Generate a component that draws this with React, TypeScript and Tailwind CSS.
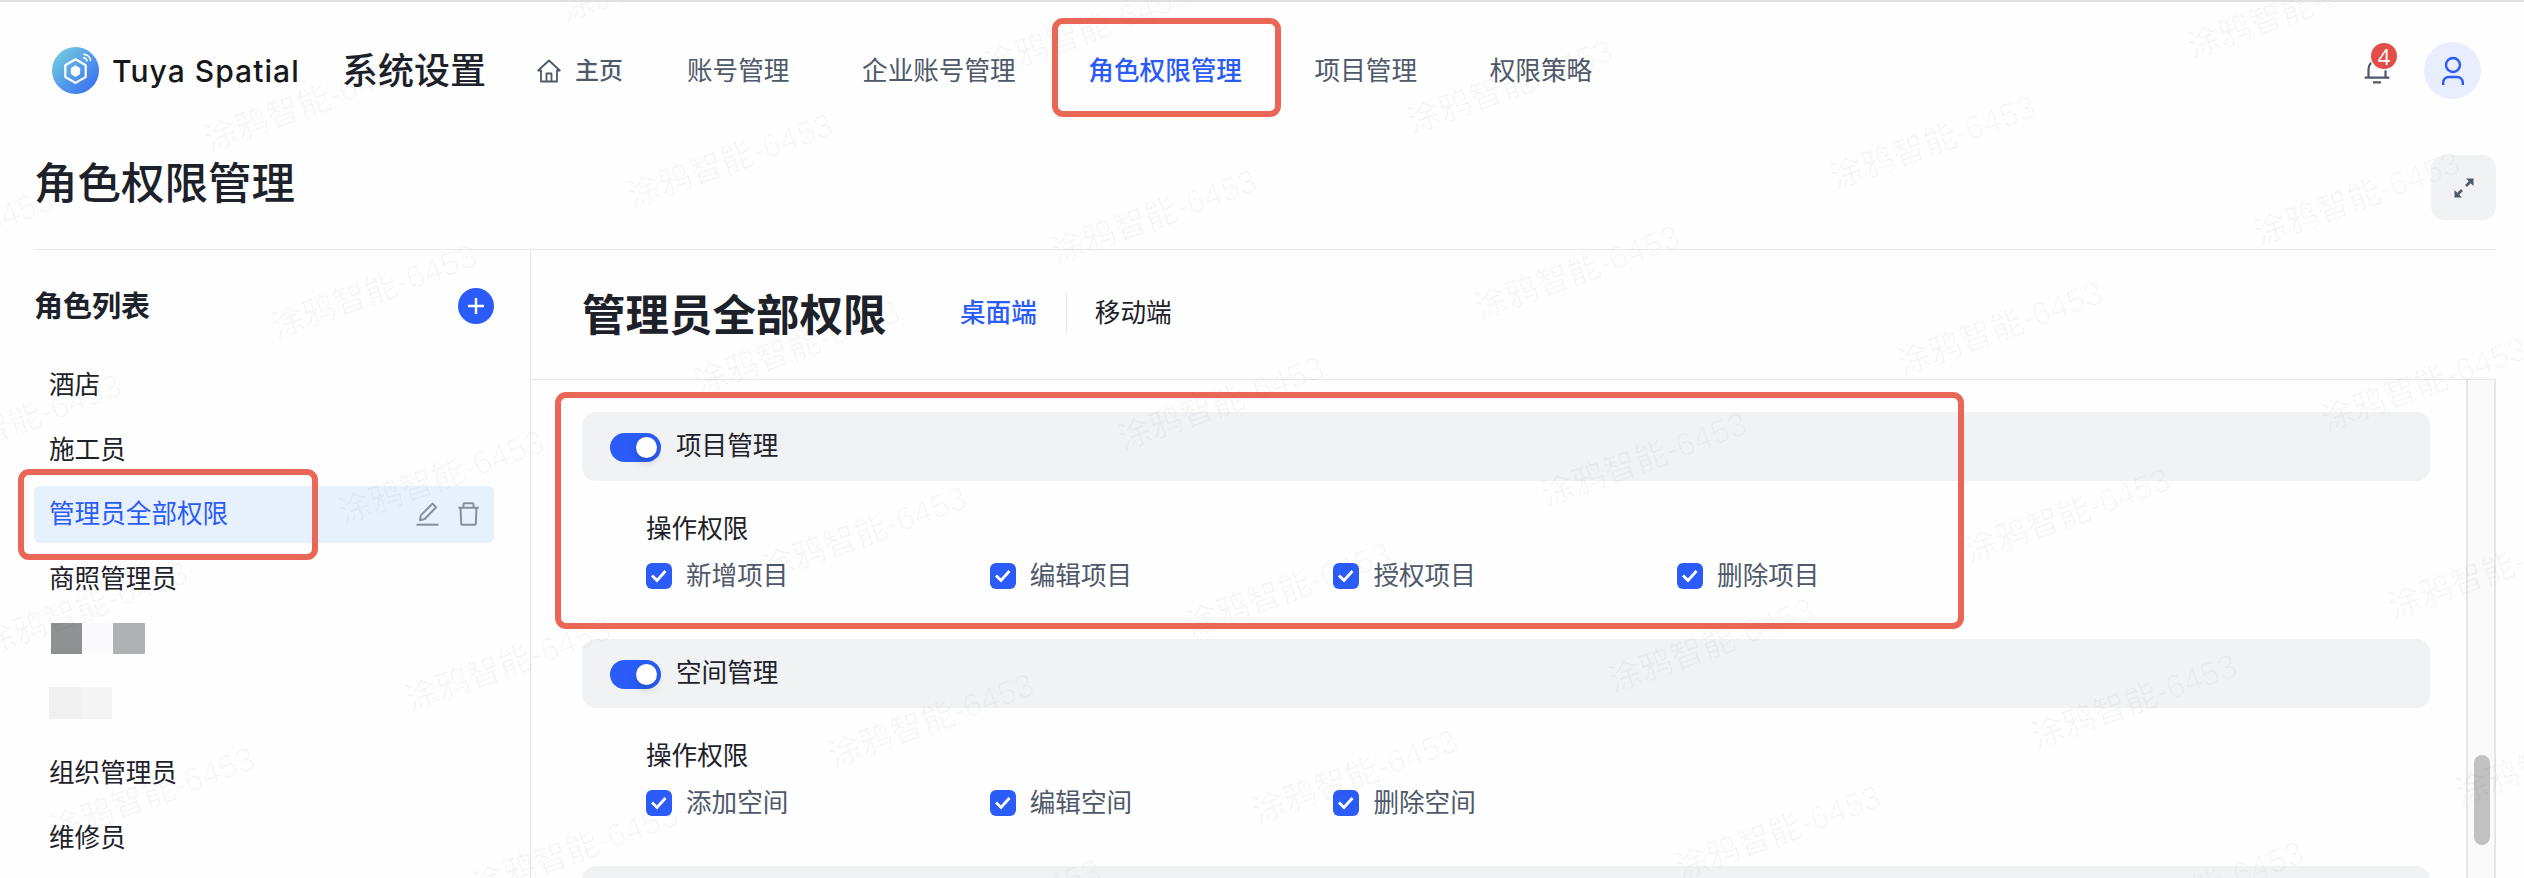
import React, { useState } from "react";

const FONT = "font-['Inter','Noto_Sans_CJK_SC',sans-serif]";

const NAV = ["账号管理", "企业账号管理", "角色权限管理", "项目管理", "权限策略"];

const ROLES = [
  { name: "酒店" },
  { name: "施工员" },
  { name: "管理员全部权限" },
  { name: "商照管理员" },
  { name: "", mask: "dark" },
  { name: "", mask: "light" },
  { name: "组织管理员" },
  { name: "维修员" },
];

const GROUPS = [
  { title: "项目管理", items: ["新增项目", "编辑项目", "授权项目", "删除项目"] },
  { title: "空间管理", items: ["添加空间", "编辑空间", "删除空间"] },
];

// Every mark is one step of a skewed grid away from the next
const MARKS: { x: number; y: number }[] = [];
for (let i = -2; i < 8; i++) {
  for (let j = -4; j < 7; j++) {
    const x = 307 + i * 423.3 + j * 67;
    const y = 104 + i * 56 + j * 186.5;
    if (x > -100 && x < 2624 && y > -45 && y < 923) MARKS.push({ x, y });
  }
}

function Logo() {
  return (
    <svg width="47" height="47" viewBox="0 0 47 47" fill="none">
      <defs>
        <linearGradient id="logo" x1="6" y1="6" x2="41" y2="41" gradientUnits="userSpaceOnUse">
          <stop stopColor="#6fc7e0" />
          <stop offset="1" stopColor="#3c74f0" />
        </linearGradient>
      </defs>
      <circle cx="23.5" cy="23.5" r="23.5" fill="url(#logo)" />
      <path d="M23.500 12.300l10.200 5.900v11.800l-10.200 5.900-10.200-5.900V18.200z" stroke="#fff" strokeWidth="2.200" strokeLinejoin="round" />
      <path d="M23.500 18.800l4.200 2.500v5.600l-4.200 2.500-4.200-2.500v-5.600z" fill="#fff" stroke="#fff" strokeLinejoin="round" />
      <path d="M32 7.400a7 7 0 0 1 6.500 6M31.500 10.800a3.600 3.600 0 0 1 3.400 3" stroke="#fff" strokeWidth="1.600" strokeLinecap="round" />
    </svg>
  );
}

function HomeIcon() {
  return (
    <svg width="24" height="24" viewBox="0 0 24 24" fill="none" stroke="#4e5969" strokeWidth="1.800" strokeLinejoin="round">
      <path d="M4 11.500H1.200L12 1.500l10.800 10H20V22.500H4z" />
      <path d="M9.500 22v-7.500h5V22" />
    </svg>
  );
}

function BellIcon() {
  return (
    <svg width="26" height="26" viewBox="0 0 26 26" fill="none" stroke="#4e5969" strokeWidth="2.200">
      <path d="M4.500 19.500V11a8.500 8.500 0 0 1 17 0v8.500M.7 19.700h24.600M9 24.300h8" />
    </svg>
  );
}

function UserIcon() {
  return (
    <svg width="24" height="30" viewBox="0 0 24 30" fill="none" stroke="#2b5cf9" strokeWidth="2.400">
      <circle cx="12" cy="9" r="7" />
      <path d="M2.200 29v-2.500a5.500 5.500 0 0 1 5.500-5.500h8.600a5.500 5.500 0 0 1 5.500 5.500V29" />
    </svg>
  );
}

function ExpandIcon() {
  return (
    <svg width="20" height="20" viewBox="0 0 20 20" fill="#4e5969" stroke="#4e5969">
      <path d="M12 .5h7.500V8zM.5 12v7.500H8z" stroke="none" />
      <path d="M12 8l4-4M8 12l-4 4" strokeWidth="2.600" />
    </svg>
  );
}

function EditIcon() {
  return (
    <svg width="23" height="24" viewBox="0 0 23 24" fill="none" stroke="#868e9b" strokeWidth="2" strokeLinejoin="round">
      <path d="M4 18.200l.8-4.800L16.500 1.600l3.600 3.600L8.700 17z" />
      <path d="M.5 22.700h22" />
    </svg>
  );
}

function TrashIcon() {
  return (
    <svg width="21" height="24" viewBox="0 0 21 24" fill="none" stroke="#868e9b" strokeWidth="2" strokeLinejoin="round">
      <path d="M.3 5.800h20.400M5.500 5.500V2.200a1 1 0 0 1 1-1h8a1 1 0 0 1 1 1v3.300M2.500 6l.7 15.500a1.200 1.200 0 0 0 1.200 1.200h12.200a1.200 1.200 0 0 0 1.200-1.200L18.500 6" />
    </svg>
  );
}

function Switch() {
  return (
    <span className="flex h-[29px] w-[51px] items-center justify-end rounded-full bg-[#2b5cf9] pr-1">
      <span className="size-[21px] rounded-full bg-white shadow-[0_4px_8px_rgba(0,35,11,0.2)]" />
    </span>
  );
}

function Checkbox({ label }: { label: string }) {
  return (
    <label className="flex w-[343.7px] items-center gap-3.5 text-[#4e5969]">
      <span className="flex size-[26px] items-center justify-center rounded-[6px] bg-[#2b5cf9]">
        <svg width="18" height="14" viewBox="0 0 18 14" fill="none" stroke="#fff" strokeWidth="2.800">
          <path d="M2 6.500l5 5L15.500 2" />
        </svg>
      </span>
      {label}
    </label>
  );
}

function Mask({ kind }: { kind: string }) {
  if (kind === "dark") {
    return (
      <span className="ml-0.5 flex h-[31px] -translate-y-[5px]">
        <span className="w-[31px] bg-[#8f9193]" />
        <span className="w-[31px] bg-[#fafafc]" />
        <span className="w-8 bg-[#b0b1b3]" />
      </span>
    );
  }
  return (
    <span className="flex h-8 -translate-y-[5px]">
      <span className="w-8 bg-[#f0f0f0]" />
      <span className="w-[31px] bg-[#f4f4f4]" />
    </span>
  );
}

function Highlight({ className }: { className: string }) {
  return <span className={`pointer-events-none absolute z-10 rounded-[11px] border-[6px] border-[#ea6656] ${className}`} />;
}

export default function App() {
  const [activeRole, setActiveRole] = useState(2);

  return (
    <div className={`relative flex h-[878px] w-[2524px] flex-col overflow-hidden border-t-2 border-[#e0e0e0] bg-[#fefefe] text-[25.6px] leading-none text-[#1d2129] ${FONT}`}>
      {/* Top bar */}
      <header className="flex h-[137px] shrink-0 items-center pr-[43px] pl-[52px]">
        <Logo />
        <span className="ml-[13px] w-[230px] text-[30px] font-medium tracking-[1.05px] text-[#17181a]">Tuya Spatial</span>
        <span className="w-[195px] text-4xl font-medium">系统设置</span>
        <span className="flex w-[150px] items-center gap-3.5 text-2xl font-medium text-[#4e5969]">
          <HomeIcon />
          主页
        </span>
        <nav className="flex flex-1 items-center gap-[72.7px] text-[#4e5969]">
          {NAV.map((item) =>
            item === "角色权限管理" ? (
              <a key={item} className="relative font-medium text-[#2b5cf9]">
                {item}
                <Highlight className="-top-[40px] -left-[36px] h-[99px] w-[229px]" />
              </a>
            ) : (
              <a key={item}>{item}</a>
            ),
          )}
        </nav>
        <span className="relative mr-[34px]">
          <BellIcon />
          <span className="absolute -top-[15px] left-[7px] flex size-[26px] items-center justify-center rounded-full bg-[#e34d48] font-['Open_Sans',sans-serif] text-[22px] text-white ring-[1.5px] ring-white">
            4
          </span>
        </span>
        <span className="flex size-[57px] items-center justify-center rounded-full bg-[#e8eefe]">
          <UserIcon />
        </span>
      </header>

      {/* Page title */}
      <div className="mr-7 ml-[34px] flex h-[111px] shrink-0 items-start justify-between border-b border-[#e8e8ea] pt-4">
        <h1 className="pt-[7px] text-[43.5px] font-medium">角色权限管理</h1>
        <button className="flex size-[65px] items-center justify-center rounded-[14px] bg-[#f1f2f4]">
          <ExpandIcon />
        </button>
      </div>

      <div className="mr-7 ml-[34px] flex min-h-0 flex-1">
        {/* Role list */}
        <aside className="w-[497px] shrink-0 border-r border-[#e5e6e8] pt-[38px] pr-9">
          <div className="flex h-9 items-center justify-between">
            <h2 className="text-[29px] font-bold">角色列表</h2>
            <button className="flex size-9 items-center justify-center rounded-full bg-[#2b5cf9]">
              <svg width="16" height="16" viewBox="0 0 16 16" stroke="#fff" strokeWidth="2.400">
                <path d="M8 0v16M0 8h16" />
              </svg>
            </button>
          </div>
          <ul className="mt-8 flex flex-col gap-[7.8px]">
            {ROLES.map((role, i) => (
              <li
                key={i}
                onClick={() => setActiveRole(i)}
                className={`relative flex h-[57px] items-center rounded-md px-[15px] ${
                  i === activeRole ? "bg-[#e7f1fe] text-[#2b5cf9]" : ""
                }`}
              >
                {role.mask ? <Mask kind={role.mask} /> : role.name}
                {i === activeRole && (
                  <>
                    <span className="ml-auto flex items-center gap-[19px]">
                      <EditIcon />
                      <TrashIcon />
                    </span>
                    <Highlight className="-top-[17px] -left-4 h-[91px] w-[300px]" />
                  </>
                )}
              </li>
            ))}
          </ul>
        </aside>

        {/* Permissions of the selected role */}
        <main className="flex min-w-0 flex-1 flex-col">
          <div className="flex h-[130px] shrink-0 items-start border-b border-[#e5e6e8] pl-[51px]">
            <h2 className="w-[378px] pt-11 text-[43.5px] font-bold">管理员全部权限</h2>
            <div className="mt-[43px] flex h-10 items-center">
              <span className="pr-[29px] font-medium text-[#2b5cf9]">桌面端</span>
              <span className="h-full w-px bg-[#e5e6e8]" />
              <span className="pl-7">移动端</span>
            </div>
          </div>

          <div className="flex min-h-0 flex-1">
            <div className="flex-1 overflow-hidden pt-8 pr-9 pl-[51px]">
              {GROUPS.map((group) => (
                <section key={group.title} className="h-[227px]">
                  <div className="flex h-[69px] items-center gap-[15px] rounded-[14px] bg-[#f1f2f4] pt-0.5 pl-7">
                    <Switch />
                    <span className="-mt-1">{group.title}</span>
                  </div>
                  <p className="mt-[35px] pl-16">操作权限</p>
                  <div className="mt-[21px] flex pl-16">
                    {group.items.map((item) => (
                      <Checkbox key={item} label={item} />
                    ))}
                  </div>
                </section>
              ))}
              <div className="h-[69px] rounded-[14px] bg-[#f1f2f4]" />
            </div>
            {/* Scrollbar */}
            <div className="w-[30px] border-x-2 border-[#e6e6e6] bg-[#fafafa] pt-[375px] pl-1.5">
              <div className="h-[90px] w-4 rounded-full bg-[#c1c1c1]" />
            </div>
          </div>
        </main>
      </div>

      <Highlight className="top-[390px] left-[555px] h-[237px] w-[1409px]" />

      {/* Watermark */}
      <div className="pointer-events-none absolute inset-0 -top-0.5 overflow-hidden">
        {MARKS.map((m) => (
          <span
            key={`${m.x}-${m.y}`}
            className="absolute -translate-x-1/2 -translate-y-1/2 -rotate-20 font-['Liberation_Sans','Noto_Sans_CJK_SC',sans-serif] text-[33px] font-medium whitespace-nowrap text-black/[0.026]"
            style={{ left: m.x, top: m.y }}
          >
            涂鸦智能-6453
          </span>
        ))}
      </div>
    </div>
  );
}
